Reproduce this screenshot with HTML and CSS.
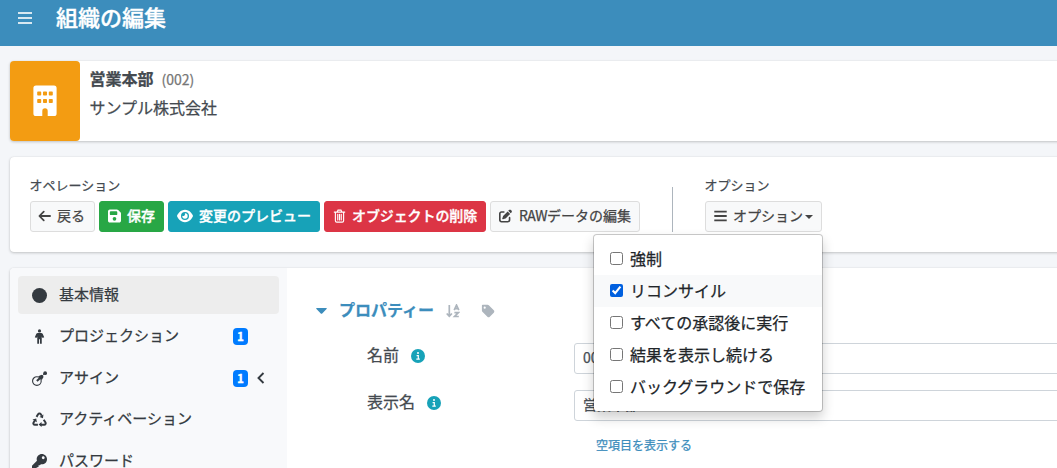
FILE: index.html
```
<!DOCTYPE html>
<html lang="ja">

<head>
    <meta charset="UTF-8">
    <meta name="viewport" content="width=device-width, initial-scale=1.0">
    <title>組織の編集</title>
    <link rel="stylesheet" href="styles.css">
</head>

<body>
    <header class="navbar">
        <svg class="menu-toggle" viewBox="0 0 14 12"><path d="M0 1h14M0 6h14M0 11h14" stroke="currentColor" stroke-width="1.8"/></svg>
        <h1>組織の編集</h1>
    </header>

    <main class="content">
        <!-- Summary -->
        <section class="card summary">
            <div class="summary-icon">
                <svg viewBox="0 0 24 32" width="24" height="32">
                    <path fill="currentColor" fill-rule="evenodd" d="M3 .5h18a2.6 2.6 0 0 1 2.6 2.6v25.3a2.6 2.6 0 0 1-2.6 2.6h-6.3v-5a2.7 2.7 0 0 0-5.4 0v5H3a2.6 2.6 0 0 1-2.6-2.6V3.1A2.6 2.6 0 0 1 3 .5zM5 6.5h2.4a.8.8 0 0 1 .8.8v2.4a.8.8 0 0 1-.8.8H5a.8.8 0 0 1-.8-.8V7.3a.8.8 0 0 1 .8-.8zm5.8 0h2.4a.8.8 0 0 1 .8.8v2.4a.8.8 0 0 1-.8.8h-2.4a.8.8 0 0 1-.8-.8V7.3a.8.8 0 0 1 .8-.8zm5.8 0H19a.8.8 0 0 1 .8.8v2.4a.8.8 0 0 1-.8.8h-2.4a.8.8 0 0 1-.8-.8V7.3a.8.8 0 0 1 .8-.8zM5 14h2.4a.8.8 0 0 1 .8.8v2.4a.8.8 0 0 1-.8.8H5a.8.8 0 0 1-.8-.8v-2.4A.8.8 0 0 1 5 14zm5.8 0h2.4a.8.8 0 0 1 .8.8v2.4a.8.8 0 0 1-.8.8h-2.4a.8.8 0 0 1-.8-.8v-2.4a.8.8 0 0 1 .8-.8zm5.8 0H19a.8.8 0 0 1 .8.8v2.4a.8.8 0 0 1-.8.8h-2.4a.8.8 0 0 1-.8-.8v-2.4a.8.8 0 0 1 .8-.8z"/>
                </svg>
            </div>
            <div class="summary-text">
                <div><strong>営業本部</strong><span class="identifier">(002)</span></div>
                <div>サンプル株式会社</div>
            </div>
        </section>

        <!-- Operations -->
        <section class="card operations">
            <div class="group">
                <div class="group-title">オペレーション</div>
                <div class="buttons">
                    <button class="btn btn-back">
                        <svg class="icon" viewBox="0 0 14 14"><path d="M13 7H2M6.2 2.3L1.5 7l4.7 4.7" fill="none" stroke="currentColor" stroke-width="1.9" stroke-linecap="round" stroke-linejoin="round"/></svg>
                        <span>戻る</span>
                    </button>
                    <button class="btn btn-success">
                        <svg class="icon" viewBox="0 0 448 448"><path fill="currentColor" fill-rule="evenodd" d="M64 0h242c17 0 33 7 45 19l78 78c12 12 19 28 19 45v242c0 35-29 64-64 64H64c-35 0-64-29-64-64V64C0 29 29 0 64 0zm0 96v64c0 18 14 32 32 32h192c18 0 32-14 32-32V96c0-18-14-32-32-32H96c-18 0-32 14-32 32zm160 288a64 64 0 1 0 0-128 64 64 0 0 0 0 128z"/></svg>
                        <span>保存</span>
                    </button>
                    <button class="btn btn-info">
                        <svg class="icon icon-wide" viewBox="0 0 576 448"><path fill="currentColor" fill-rule="evenodd" d="M288 0c-81 0-146 37-193 80C48 124 17 176 2 212c-3 8-3 16 0 24 15 36 46 88 93 132 47 43 112 80 193 80s146-37 193-80c47-44 78-96 93-132 3-8 3-16 0-24-15-36-46-88-93-132C434 37 369 0 288 0zm0 80a144 144 0 1 1 0 288 144 144 0 0 1 0-288zm0 80c0 35-29 64-64 64-12 0-22-3-32-9a96 96 0 1 0 87-87c6 10 9 20 9 32z"/></svg>
                        <span>変更のプレビュー</span>
                    </button>
                    <button class="btn btn-danger">
                        <svg class="icon" viewBox="0 0 14 16"><path d="M1 3.5h12M4.3 3.5L5.3 1.3h3.4l1 2.2M2.3 3.7v9.8c0 .9.6 1.5 1.5 1.5h6.4c.9 0 1.5-.6 1.5-1.5V3.7M5 6v6.5M7 6v6.5M9 6v6.5" fill="none" stroke="currentColor" stroke-width="1.3" stroke-linecap="round"/></svg>
                        <span>オブジェクトの削除</span>
                    </button>
                    <button class="btn btn-raw">
                        <svg class="icon" viewBox="0 0 512 512"><path fill="currentColor" d="M472 22c-22-22-57-22-79 0l-30 30 98 97 30-30c22-22 22-57 0-79l-19-18zM172 242c-6 6-11 14-14 22l-29 89c-3 9-1 18 6 25s16 9 25 6l89-30c8-3 16-7 22-13l168-168-98-98-169 167zM96 64c-53 0-96 43-96 96v256c0 53 43 96 96 96h256c53 0 96-43 96-96v-96c0-18-14-32-32-32s-32 14-32 32v96c0 18-14 32-32 32H96c-18 0-32-14-32-32V160c0-18 14-32 32-32h96c18 0 32-14 32-32s-14-32-32-32H96z"/></svg>
                        <span><span class="latin">RAW</span>データの編集</span>
                    </button>
                </div>
            </div>
            <div class="divider"></div>
            <div class="group options">
                <div class="group-title">オプション</div>
                <button class="btn">
                    <svg class="icon" viewBox="0 0 14 14"><path d="M.3 2.3h13.4M.3 7h13.4M.3 11.7h13.4" stroke="currentColor" stroke-width="1.9"/></svg>
                    <span>オプション</span><i class="caret"></i>
                </button>
                <div class="dropdown-menu">
                    <label><input type="checkbox"><span>強制</span></label>
                    <label class="selected"><input type="checkbox" checked><span>リコンサイル</span></label>
                    <label><input type="checkbox"><span>すべての承認後に実行</span></label>
                    <label><input type="checkbox"><span>結果を表示し続ける</span></label>
                    <label><input type="checkbox"><span>バックグラウンドで保存</span></label>
                </div>
            </div>
        </section>

        <!-- Details -->
        <section class="card details">
            <nav class="sidebar">
                <a class="nav-item active">
                    <svg viewBox="0 0 16 16"><circle cx="8" cy="8" r="8" fill="currentColor"/></svg>
                    <span>基本情報</span>
                </a>
                <a class="nav-item">
                    <svg viewBox="0 0 16 16"><g fill="currentColor"><circle cx="8" cy="2" r="1.7"/><path d="M6.3 4.200h3.400c.9 0 1.400.4 1.800 1.100l1.500 3.500-1.700.8-.9-1.600v7.700H8.500V11h-1v4.700H5.600V8l-.9 1.600L3 8.800l1.500-3.500c.4-.7.9-1.100 1.800-1.100z"/></g></svg>
                    <span>プロジェクション</span>
                    <b class="badge">1</b>
                </a>
                <a class="nav-item">
                    <svg viewBox="0 0 16 16"><circle cx="5.2" cy="10.7" r="4.6" fill="none" stroke="currentColor" stroke-width="1.2"/><path d="M5.2 10.7l5-4.7" stroke="currentColor" stroke-width="2.2"/><path d="M6.7 5.6l3.6-1.6 2.1 2.2-1.9 3.5z" fill="currentColor"/><path d="M10 6l4-3.7" stroke="currentColor"/><circle cx="14" cy="2.3" r="2" fill="currentColor"/></svg>
                    <span>アサイン</span>
                    <b class="badge">1</b>
                    <svg class="chevron" viewBox="0 0 8 12"><path d="M6.5 1L1.5 6l5 5" fill="none" stroke="currentColor" stroke-width="1.9"/></svg>
                </a>
                <a class="nav-item">
                    <svg viewBox="0 0 16 16"><path d="M4.8 5.2l1.7-2.7c.7-1.1 2.2-1.1 2.9 0l1 1.6M12.5 8.2l1.9 3c.6 1.1-.1 2.3-1.3 2.3H9.5M6.3 13.5H3c-1.3 0-2-1.3-1.3-2.4l1.5-2.4" fill="none" stroke="currentColor" stroke-width="2.1"/><path d="M12.2 2.6l-.5 4-3.7-1.4zM10.2 10.700v5.300l-3.200-2.600zM.5 8.100l4-1.300.7 4z" fill="currentColor"/></svg>
                    <span>アクティベーション</span>
                </a>
                <a class="nav-item">
                    <svg viewBox="0 0 512 512"><path fill="currentColor" d="M512 176.001C512 273.203 433.202 352 336 352c-11.220 0-22.190-1.062-32.827-3.069l-24.012 27.014A23.999 23.999 0 0 1 261.223 384H224v40c0 13.255-10.745 24-24 24h-40v40c0 13.255-10.745 24-24 24H24c-13.255 0-24-10.745-24-24v-78.059c0-6.365 2.529-12.470 7.029-16.971l161.802-161.802C163.108 213.814 160 195.271 160 176 160 78.798 238.797.001 335.999 0 433.488-.001 512 78.511 512 176.001zM336 128c0 26.510 21.490 48 48 48s48-21.490 48-48-21.490-48-48-48-48 21.490-48 48z"/></svg>
                    <span>パスワード</span>
                </a>
            </nav>
            <div class="panel">
                <div class="panel-header">
                    <svg class="toggle" viewBox="0 0 12 8"><path d="M1 .6h10c.8 0 1 .7.5 1.200L6.800 6.700c-.4.5-1.200.5-1.600 0L.5 1.800C0 1.300.2.6 1 .6z" fill="currentColor"/></svg>
                    <h2>プロパティー</h2>
                    <svg class="sort" viewBox="0 0 14 14"><path d="M3.3 1v11M.7 9.500l2.600 2.700 2.600-2.700M8.200 6.100l2.300-5 2.300 5M9 4.700h3M8.400 8.700h4L8.600 12.500h4.200" fill="none" stroke="currentColor" stroke-width="1.7"/></svg>
                    <svg class="tag" viewBox="0 0 14 14"><path fill="currentColor" fill-rule="evenodd" d="M1.700.8h4.900c.5 0 .9.2 1.200.5l5 5c.7.7.7 1.700 0 2.400l-4 4c-.7.7-1.700.7-2.400 0l-5-5C1.100 7.400.9 7 .9 6.500V1.600c0-.5.3-.8.8-.8zm2 1.800a1.100 1.100 0 1 0 0 2.200 1.100 1.100 0 0 0 0-2.200z"/></svg>
                </div>
                <div class="field">
                    <div class="field-label"><span>名前</span>
                        <svg class="info" viewBox="0 0 14 14"><circle cx="7" cy="7" r="7" fill="#17a2b8"/><circle cx="7" cy="4.1" r="1" fill="#fff"/><path d="M5.6 6.600h1.700v3.600M5.300 10.200h3.500" stroke="#fff" stroke-width="1.200" fill="none"/></svg>
                    </div>
                    <input type="text" value="002">
                </div>
                <div class="field">
                    <div class="field-label"><span>表示名</span>
                        <svg class="info" viewBox="0 0 14 14"><circle cx="7" cy="7" r="7" fill="#17a2b8"/><circle cx="7" cy="4.1" r="1" fill="#fff"/><path d="M5.6 6.600h1.700v3.600M5.300 10.200h3.500" stroke="#fff" stroke-width="1.200" fill="none"/></svg>
                    </div>
                    <input type="text" value="営業本部">
                </div>
                <a class="show-empty">空項目を表示する</a>
            </div>
        </section>
    </main>
</body>

</html>
```

FILE: styles.css
```
* {
    box-sizing: border-box;
}

html {
    overflow: hidden;
}

body {
    margin: 0;
    height: 468px;
    overflow: hidden;
    font-family: "Noto Sans CJK JP", sans-serif;
    font-size: 16px;
    line-height: 24px;
    color: #444a50;
    background-color: #f4f6f9;
    -webkit-text-stroke: 0.25px;
}

svg {
    display: block;
    flex: none;
}

.navbar {
    display: flex;
    height: 46px;
    padding: 2px 18px;
    background-color: #3c8dbc;
    color: white;
}

.menu-toggle {
    width: 14px;
    height: 12px;
    margin: 10px 24px 0 0;
    opacity: 0.8;
}

h1 {
    margin: 0;
    font-size: 22px;
    font-weight: 500;
    line-height: 28px;
    -webkit-text-stroke: 0.35px;
}

.content {
    width: 1100px;
    padding: 15px 0 0 10px;
}

.card {
    display: flex;
    margin-bottom: 16px;
    background-color: white;
    border-radius: 4px;
    box-shadow: 0 0 1px rgba(0, 0, 0, 0.13), 0 1px 3px rgba(0, 0, 0, 0.2);
}

.summary {
    height: 80px;
}

.summary-icon {
    display: flex;
    align-items: center;
    justify-content: center;
    width: 70px;
    border-radius: 4px;
    background-color: #f39c12;
    color: white;
}

.summary-text {
    padding: 5px 9.5px;
}

.summary-text div {
    height: 29px;
}

.identifier {
    margin-left: 8px;
    font-size: 14px;
    color: #777;
}

.operations {
    height: 95px;
    padding: 18px 20px;
}

.group-title {
    height: 26px;
    margin-left: -0.5px;
    font-size: 13px;
    line-height: 20px;
}

.buttons {
    display: flex;
    gap: 4px;
}

.btn {
    display: flex;
    align-items: center;
    gap: 6px;
    height: 31px;
    padding: 0 8px 2px;
    border: 1px solid #ddd;
    border-radius: 3px;
    background-color: #f8f9fa;
    font-family: inherit;
    font-size: 14px;
    line-height: 21px;
    color: #444;
    white-space: nowrap;
    -webkit-text-stroke: 0.25px;
}

.btn-back {
    padding: 0 9px 2px 7px;
}

.btn-success,
.btn-info,
.btn-danger {
    color: white;
    font-weight: 500;
    -webkit-text-stroke: 0.35px;
}

.btn-success {
    background-color: #28a745;
    border-color: #28a745;
}

.btn-info {
    background-color: #17a2b8;
    border-color: #17a2b8;
}

.btn-danger {
    background-color: #dc3545;
    border-color: #dc3545;
    letter-spacing: -0.1px;
}

.btn-raw {
    gap: 7px;
}

.latin {
    letter-spacing: -0.6px;
}

.icon {
    width: 13px;
    height: 14px;
}

.icon-wide {
    width: 16px;
}

.divider {
    width: 1px;
    height: 45px;
    margin: 12px 32px 0;
    background-color: #adb5bd;
}

.options {
    position: relative;
}

.caret {
    margin: 2px 0 0 -4px;
    border: 4px solid transparent;
    border-top-color: currentColor;
    border-bottom: 0;
}

.dropdown-menu {
    position: absolute;
    top: 59px;
    right: -1px;
    z-index: 10;
    width: 230px;
    padding: 8px 0;
    border: 1px solid rgba(0, 0, 0, 0.2);
    border-radius: 4px;
    background-color: white;
    background-clip: padding-box;
    box-shadow: 0 6px 12px rgba(0, 0, 0, 0.18);
    color: #212529;
}

.dropdown-menu label {
    display: flex;
    align-items: center;
    height: 32px;
    padding: 0 16px 1px;
    white-space: nowrap;
}

.dropdown-menu label span {
    margin-top: -2px;
}

.dropdown-menu .selected {
    background-color: #f8f9fa;
}

.dropdown-menu input {
    width: 13px;
    height: 13px;
    margin: 0 7px 0 0;
    accent-color: #0060df;
}

.details {
    height: 300px;
}

.sidebar {
    width: 277px;
    padding: 8px;
    border-radius: 4px 0 0;
    background-color: #f8f9fb;
    font-size: 15px;
    color: #343a40;
}

.nav-item {
    display: flex;
    align-items: center;
    height: 38px;
    margin-bottom: 3.5px;
    padding: 0 13px 0 14px;
    border-radius: 4px;
}

.nav-item svg {
    width: 15px;
    height: 15px;
    margin-right: 12px;
}

.nav-item span {
    margin-top: -3px;
}

.nav-item.active {
    background-color: #ededed;
}

.badge {
    width: 15px;
    height: 17px;
    margin-left: auto;
    margin-right: 18px;
    border-radius: 4px;
    background-color: #007bff;
    color: white;
    font-size: 11px;
    line-height: 16px;
    text-align: center;
    -webkit-text-stroke: 0.5px;
}

.badge:has(+ .chevron) {
    margin-right: 9px;
}

.nav-item .chevron {
    width: 8px;
    height: 12px;
    margin-right: 1px;
}

.panel {
    flex: 1;
    padding: 30px 29px;
}

.panel-header {
    display: flex;
    align-items: center;
    height: 24px;
    color: #3c8dbc;
}

.toggle {
    width: 11px;
    height: 8px;
    margin: 2px 12px 0 0;
}

h2 {
    margin: -3px 0 0;
    font-size: 16px;
    font-weight: 700;
}

.sort {
    width: 14px;
    height: 14px;
    margin: 2px 0 0 12px;
    color: #adb5bd;
}

.tag {
    width: 14px;
    height: 14px;
    margin: 1px 0 0 21px;
    color: #adb5bd;
}

.field {
    display: flex;
    height: 31px;
    margin-top: 16px;
}

.panel-header + .field {
    margin-top: 21px;
}

.field-label {
    display: flex;
    align-items: center;
    gap: 12px;
    width: 258px;
    height: 26px;
    padding-left: 51px;
}

.field-label span {
    margin-top: -4px;
}

.info {
    width: 14px;
    height: 14px;
}

.field input {
    flex: 1;
    padding: 0 8px 4px;
    border: 1px solid #ced4da;
    border-radius: 3px;
    background-color: white;
    font-family: inherit;
    font-size: 14px;
    color: #495057;
}

.show-empty {
    display: block;
    margin: 12px 0 0 280px;
    font-size: 12px;
    color: #3c8dbc;
}
```
